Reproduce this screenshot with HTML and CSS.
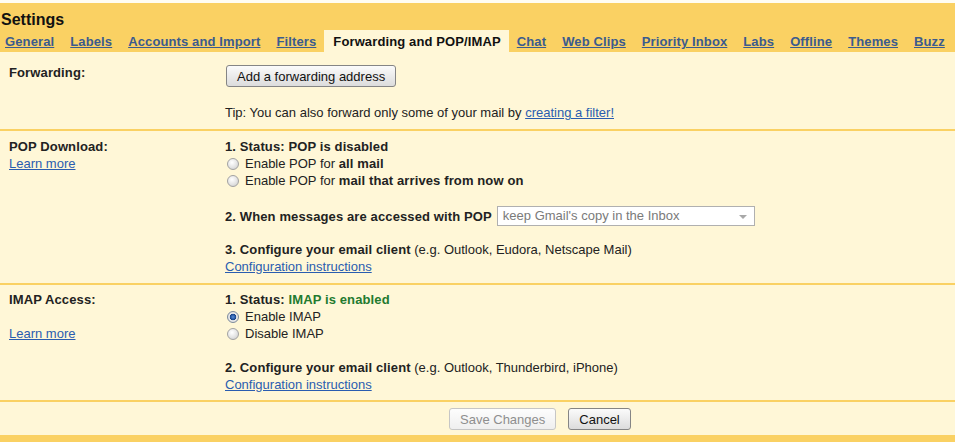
FILE: index.html
```html
<!DOCTYPE html>
<html lang="en">
<head>
    <meta charset="UTF-8">
    <title>Settings - Forwarding and POP/IMAP</title>
    <link rel="stylesheet" href="styles.css">
</head>
<body>

<div class="settings">
    <div class="header">
        <h1 class="title">Settings</h1>
        <div class="tabs">
            <a href="#" class="tab">General</a>
            <a href="#" class="tab">Labels</a>
            <a href="#" class="tab">Accounts and Import</a>
            <a href="#" class="tab">Filters</a>
            <span class="tab active">Forwarding and POP/IMAP</span>
            <a href="#" class="tab">Chat</a>
            <a href="#" class="tab">Web Clips</a>
            <a href="#" class="tab">Priority Inbox</a>
            <a href="#" class="tab">Labs</a>
            <a href="#" class="tab">Offline</a>
            <a href="#" class="tab">Themes</a>
            <a href="#" class="tab">Buzz</a>
        </div>
    </div>

    <!-- Forwarding -->
    <div class="section forwarding">
        <div class="label-col"><b>Forwarding:</b></div>
        <div class="main-col">
            <button class="btn btn-add">Add a forwarding address</button>
            <div class="tip">Tip: You can also forward only some of your mail by <a href="#" class="link">creating a filter!</a></div>
        </div>
    </div>

    <!-- POP -->
    <div class="section pop">
        <div class="label-col">
            <b>POP Download:</b><br>
            <a href="#" class="link">Learn more</a>
        </div>
        <div class="main-col">
            <div class="line"><b>1. Status: POP is disabled</b></div>
            <div class="radio-row"><span class="radio"></span>Enable POP for&nbsp;<b>all mail</b></div>
            <div class="radio-row"><span class="radio"></span>Enable POP for&nbsp;<b>mail that arrives from now on</b></div>

            <div class="select-row">
                <b>2. When messages are accessed with POP</b>
                <div class="fake-select">keep Gmail's copy in the Inbox</div>
            </div>

            <div class="block">
                <b>3. Configure your email client</b> (e.g. Outlook, Eudora, Netscape Mail)<br>
                <a href="#" class="link">Configuration instructions</a>
            </div>
        </div>
    </div>

    <!-- IMAP -->
    <div class="section imap">
        <div class="label-col">
            <b>IMAP Access:</b><br>
            <br>
            <a href="#" class="link">Learn more</a>
        </div>
        <div class="main-col">
            <div class="line"><b>1. Status: <span class="enabled">IMAP is enabled</span></b></div>
            <div class="radio-row"><span class="radio checked"></span>Enable IMAP</div>
            <div class="radio-row"><span class="radio"></span>Disable IMAP</div>

            <div class="block block-imap">
                <b>2. Configure your email client</b> (e.g. Outlook, Thunderbird, iPhone)<br>
                <a href="#" class="link">Configuration instructions</a>
            </div>
        </div>
    </div>

    <div class="footer">
        <button class="btn" disabled>Save Changes</button>
        <button class="btn">Cancel</button>
    </div>
</div>

</body>
</html>
```

FILE: styles.css
```css
body {
    margin: 0;
    padding: 0;
    background-color: #fffdf3;
    font-family: "Liberation Sans", Arial, sans-serif;
    font-size: 13px;
    line-height: 17px;
    color: #222;
}
b {
    letter-spacing: 0.12px;
}
.settings {
    margin-top: 3px;
    background-color: #fff7d7;
}
.header {
    background-color: #fad163;
    padding-top: 7px;
}
.title {
    margin: 0 0 1px 1px;
    font-size: 16px;
    line-height: 19px;
    font-weight: bold;
    color: #111;
}
.tabs {
    display: flex;
}
.tab {
    padding: 3px 8px 2px 8px;
    font-weight: bold;
    letter-spacing: 0.12px;
    color: #3b5b8e;
    text-decoration: underline;
    white-space: nowrap;
}
.tab:first-child {
    padding-left: 5px;
}
.tab.active {
    background-color: #fff7d7;
    color: #111;
    text-decoration: none;
    padding-left: 9px;
}
.section {
    display: flex;
    border-bottom: 2px solid #fad163;
}
.label-col {
    width: 225px;
    box-sizing: border-box;
    padding-left: 9px;
    flex-shrink: 0;
}
.main-col {
    flex: 1;
}
.forwarding {
    padding: 12px 0 8px 0;
}
.pop {
    padding: 7px 0 8px 0;
}
.imap {
    padding: 6px 0 7px 0;
}
.link {
    color: #2a5db0;
    text-decoration: underline;
}
.tip {
    margin-top: 17px;
}
.enabled {
    color: #237a2f;
}
.radio-row {
    display: flex;
    align-items: center;
    padding-left: 2px;
}
.radio {
    width: 12px;
    height: 12px;
    box-sizing: border-box;
    border-radius: 50%;
    border: 1px solid #a2a2a2;
    background: radial-gradient(circle at 40% 35%, #ffffff 0, #e6e6e6 50%, #c9c9c9 100%);
    margin-right: 6px;
    flex-shrink: 0;
}
.radio.checked {
    border-color: #7d8b9c;
    background: radial-gradient(circle at 50% 50%, #5b8fd6 0, #1f4f9c 2.5px, #17407f 3px, #ececec 3.6px, #cfcfcf 100%);
}
.select-row {
    display: flex;
    align-items: center;
    height: 20px;
    margin-top: 17px;
}
.fake-select {
    position: relative;
    margin-left: 5px;
    width: 258px;
    height: 20px;
    box-sizing: border-box;
    border: 1px solid #b0b0b0;
    background-color: #fff;
    color: #7a7a7a;
    padding-left: 5px;
    line-height: 18px;
}
.fake-select::after {
    content: "";
    position: absolute;
    right: 7px;
    top: 8px;
    border-left: 4px solid transparent;
    border-right: 4px solid transparent;
    border-top: 4px solid #a8a8a8;
}
.block {
    margin-top: 15px;
}
.block-imap {
    margin-top: 17px;
}
.btn {
    height: 22px;
    padding: 0 10px;
    font-family: "Liberation Sans", Arial, sans-serif;
    font-size: 13px;
    color: #111;
    background: linear-gradient(#fbfbfb, #dcdcdc);
    border: 1px solid #858585;
    border-radius: 3px;
    cursor: pointer;
}
.btn-add {
    margin-top: 1px;
    margin-left: 1px;
}
.btn:disabled {
    color: #8e8e8e;
    border-color: #c6c6c6;
    background: linear-gradient(#fdfdfd, #efefef);
    cursor: default;
}
.footer {
    display: flex;
    gap: 12px;
    padding: 6px 0 5px 449px;
    border-bottom: 7px solid #fad163;
}
```
